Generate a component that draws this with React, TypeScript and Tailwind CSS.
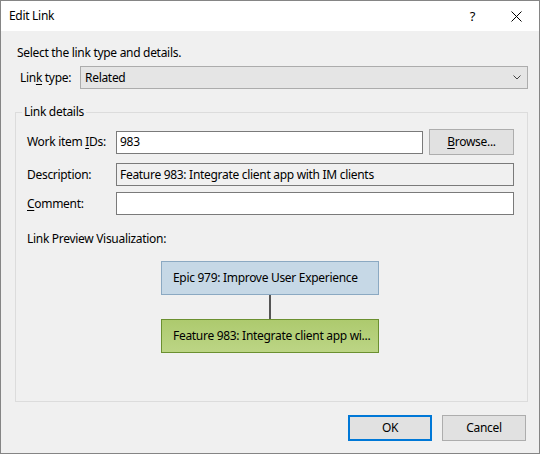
import React from 'react';

const font = "font-['Segoe_UI','Noto_Sans',sans-serif]";

const Field: React.FC<{ label: React.ReactNode; children: React.ReactNode; className?: string }> = ({ label, children, className = '' }) => (
  <div className={`flex items-center ${className}`}>
    <div className="w-[89px] shrink-0">{label}</div>
    {children}
  </div>
);

const WinButton: React.FC<{ children: React.ReactNode; primary?: boolean; className?: string }> = ({ children, primary, className = '' }) => (
  <button
    className={`h-[26px] w-[84px] bg-[#e1e1e1] flex items-center justify-center text-black ${
      primary ? 'border-2 border-[#0078d7]' : 'border border-[#adadad]'
    } ${className}`}
  >
    {children}
  </button>
);

export default function App() {
  return (
    <div className={`w-[540px] h-[454px] border border-[#858585] flex flex-col text-[12px] tracking-[-0.3px] text-black whitespace-nowrap ${font}`}>
      {/* title bar */}
      <div className="h-[30px] bg-white flex items-center pl-2 shrink-0">
        <span className="flex-1">Edit Link</span>
        <span className="w-[44px] text-center text-[13px] leading-none pl-[3px]">?</span>
        <div className="w-[46px] flex justify-center">
          <svg width="11" height="11" viewBox="0 0 11 11">
            <path d="M0.5 0.5 L10.5 10.5 M10.5 0.5 L0.5 10.5" stroke="#000" strokeWidth="1" />
          </svg>
        </div>
      </div>

      {/* body */}
      <div className="flex-1 bg-[#f0f0f0] flex flex-col pl-[14px] pr-[11px] pt-[14px]">
        <div className="pl-[2px] leading-[16px]">Select the link type and details.</div>

        <div className="flex items-center mt-[5px]">
          <div className="w-[65px] pl-[5px]">
            Lin<span className="underline underline-offset-2">k</span> type:
          </div>
          <div className="flex-1 h-[23px] bg-[#e5e5e5] border border-[#acacac] flex items-center pl-[4px] pr-[6px]">
            <span className="flex-1">Related</span>
            <svg width="8" height="5" viewBox="0 0 8 5">
              <path d="M0.5 0.5 L4 4 L7.5 0.5" stroke="#444" fill="none" strokeWidth="1" />
            </svg>
          </div>
        </div>

        <fieldset className="mt-[15px] border border-[#dcdcdc] h-[298px] pl-[11px] pr-[12px] flex flex-col">
          <legend className="ml-[-5px] px-[2px] leading-[16px]">Link details</legend>

          <Field label={<>Work item <span className="underline underline-offset-2">I</span>Ds:</>} className="mt-[9px]">
            <div className="w-[307px] h-[23px] bg-white border border-[#7a7a7a] flex items-center pl-[3px]">983</div>
            <WinButton className="ml-[6px] h-[25px] w-[85px]">
              <span>
                <span className="underline underline-offset-2">B</span>rowse...
              </span>
            </WinButton>
          </Field>

          <Field label="Description:" className="mt-[8px]">
            <div className="w-[398px] h-[23px] bg-[#f0f0f0] border border-[#7a7a7a] flex items-center pl-[3px]">
              Feature 983: Integrate client app with IM clients
            </div>
          </Field>

          <Field label={<><span className="underline underline-offset-2">C</span>omment:</>} className="mt-[6px]">
            <div className="w-[398px] h-[23px] bg-white border border-[#7a7a7a]" />
          </Field>

          <div className="mt-[16px] leading-[16px]">Link Preview Visualization:</div>

          <div className="flex flex-col items-center mt-[14px] pr-[2px]">
            <div className="w-[218px] h-[34px] bg-[#c6d8e6] border border-[#8ba9c2] flex items-center pl-[11px]">
              Epic 979: Improve User Experience
            </div>
            <div className="w-[2px] h-[24px] bg-[#555555]" />
            <div className="w-[218px] h-[34px] bg-gradient-to-b from-[#adca6e] to-[#bcd585] border border-[#6b9030] flex items-center pl-[11px]">
              Feature 983: Integrate client app wi...
            </div>
          </div>
        </fieldset>

        <div className="flex justify-end gap-[10px] mt-[13px] pr-[2px]">
          <WinButton primary>OK</WinButton>
          <WinButton>Cancel</WinButton>
        </div>
      </div>
    </div>
  );
}
